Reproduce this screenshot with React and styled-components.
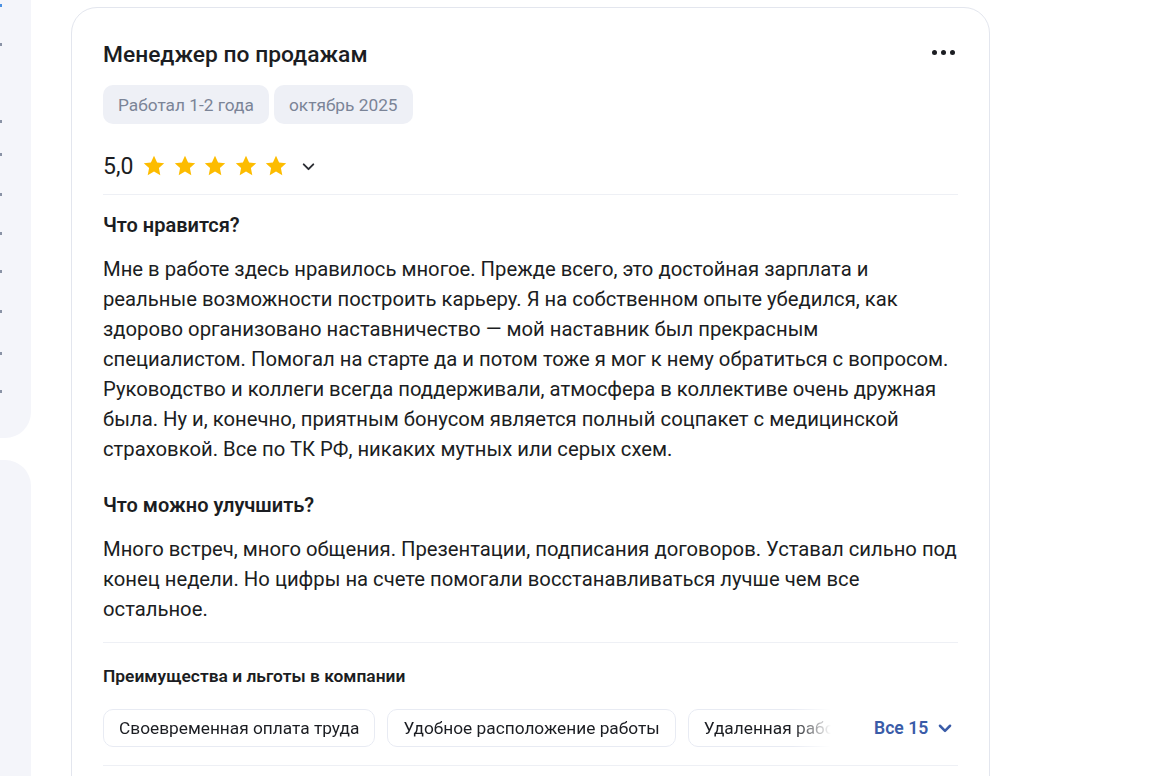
import React from 'react'
import styled, {createGlobalStyle} from 'styled-components'

const GlobalStyle = createGlobalStyle`
  html, body {
    margin: 0;
    padding: 0;
    background: #fff;
    font-family: Roboto, "Noto Sans", Arial, sans-serif;
    color: #1b1d22;
    overflow: hidden;
  }
  * {
    box-sizing: border-box;
  }
`

const liked_text = 'Мне в работе здесь нравилось многое. Прежде всего, это достойная зарплата и реальные возможности построить карьеру. Я на собственном опыте убедился, как здорово организовано наставничество — мой наставник был прекрасным специалистом. Помогал на старте да и потом тоже я мог к нему обратиться с вопросом. Руководство и коллеги всегда поддерживали, атмосфера в коллективе очень дружная была. Ну и, конечно, приятным бонусом является полный соцпакет с медицинской страховкой. Все по ТК РФ, никаких мутных или серых схем.'

const improve_text = 'Много встреч, много общения. Презентации, подписания договоров. Уставал сильно под конец недели. Но цифры на счете помогали восстанавливаться лучше чем все остальное.'

const benefits = [
  'Своевременная оплата труда',
  'Удобное расположение работы',
  'Удаленная работа',
]

const sidebar_marks = [4, 43, 120, 153, 193, 232, 270, 310, 352, 390]

const Star = () => (
  <svg width="24" height="24" viewBox="0 0 24 24">
    <path
      d="M12 1.8l3.1 6.6 7.1.8-5.3 4.9 1.4 7.1L12 17.6l-6.3 3.6 1.4-7.1L1.8 9.2l7.1-.8z"
      fill="#fdbc00"
    />
  </svg>
)

const Chevron = ({size = 16, color = '#2b2d33', stroke = 2}) => (
  <svg width={size} height={size} viewBox="0 0 16 16" fill="none">
    <path d="M3.5 6l4.5 4.5L12.5 6" stroke={color} strokeWidth={stroke} strokeLinecap="round" strokeLinejoin="round"/>
  </svg>
)

export default function App() {
  return (
    <Page>
      <GlobalStyle/>
      <Sidebar>
        <SidePanel>
          {sidebar_marks.map((top) => (
            <Mark key={top} style={{top}} first={top === 4}/>
          ))}
        </SidePanel>
        <SidePanel second/>
      </Sidebar>
      <Card>
        <Header>
          <Title>Менеджер по продажам</Title>
          <More>
            <Dot/><Dot/><Dot/>
          </More>
        </Header>
        <Tags>
          <Tag>Работал 1-2 года</Tag>
          <Tag>октябрь 2025</Tag>
        </Tags>
        <Rating>
          <Score>5,0</Score>
          <Stars>
            {[0, 1, 2, 3, 4].map((i) => <Star key={i}/>)}
          </Stars>
          <Expand>
            <Chevron size={17} stroke={1.8}/>
          </Expand>
        </Rating>
        <Divider/>
        <Section>
          <SectionTitle>Что нравится?</SectionTitle>
          <Text>{liked_text}</Text>
        </Section>
        <Section spaced>
          <SectionTitle>Что можно улучшить?</SectionTitle>
          <Text>{improve_text}</Text>
        </Section>
        <Divider top={18}/>
        <BenefitsTitle>Преимущества и льготы в компании</BenefitsTitle>
        <BenefitsRow>
          <Chips>
            {benefits.map((b) => <Chip key={b}>{b}</Chip>)}
          </Chips>
          <ShowAll>
            Все 15
            <Chevron size={18} color="#3a5ca8" stroke={2.2}/>
          </ShowAll>
        </BenefitsRow>
        <Divider top={18}/>
      </Card>
    </Page>
  )
}

const Page = styled.div`
  display: flex;
  align-items: flex-start;
  gap: 40px;
  width: 1154px;
  height: 776px;
  overflow: hidden;
`
const Sidebar = styled.div`
  width: 31px;
  flex: none;
  display: flex;
  flex-direction: column;
  gap: 22px;
`
const SidePanel = styled.div`
  position: relative;
  background: #f4f5fa;
  height: ${({second}) => second ? '400px' : '438px'};
  border-radius: ${({second}) => second ? '0 26px 0 0' : '0 0 26px 0'};
`
const Mark = styled.span`
  position: absolute;
  left: 0;
  width: 2px;
  height: 3px;
  background: ${({first}) => first ? '#4a90e2' : '#8a93a6'};
`
const Card = styled.div`
  flex: none;
  width: 919px;
  margin-top: 7px;
  min-height: 900px;
  border: 1px solid #e3e6ee;
  border-radius: 26px;
  padding: 33px 31px 0 31px;
  background: #fff;
`
const Header = styled.div`
  display: flex;
  align-items: center;
  justify-content: space-between;
  height: 28px;
`
const Title = styled.h2`
  margin: 0;
  font-size: 22.8px;
  font-weight: 500;
  line-height: 28px;
  color: #1b1d22;
`
const More = styled.div`
  display: flex;
  gap: 4px;
  margin-right: 3px;
  margin-top: -6px;
`
const Dot = styled.span`
  width: 5px;
  height: 5px;
  border-radius: 50%;
  background: #1b1d22;
`
const Tags = styled.div`
  display: flex;
  gap: 5px;
  margin-top: 16px;
`
const Tag = styled.div`
  height: 39px;
  display: flex;
  align-items: center;
  padding: 0 15px;
  background: #eef0f6;
  border-radius: 10px;
  font-size: 17.3px;
  color: #7b8497;
`
const Rating = styled.div`
  display: flex;
  align-items: center;
  height: 28px;
  margin-top: 28px;
`
const Score = styled.span`
  font-size: 23px;
  font-weight: 400;
  margin-right: 9px;
`
const Stars = styled.div`
  display: flex;
  gap: 6.5px;
  svg {
    display: block;
  }
`
const Expand = styled.span`
  display: flex;
  margin-left: 12px;
`
const Divider = styled.div`
  height: 1px;
  background: #eef0f5;
  margin-top: ${({top = 14}) => top}px;
`
const Section = styled.div`
  margin-top: ${({spaced}) => spaced ? '28px' : '17px'};
`
const SectionTitle = styled.h3`
  margin: 0;
  font-size: 20px;
  font-weight: 600;
  line-height: 26px;
`
const Text = styled.p`
  margin: 16px 0 0;
  font-size: 20.25px;
  line-height: 30px;
  color: #1b1d22;
  max-width: 858px;
`
const BenefitsTitle = styled.h4`
  margin: 22px 0 0;
  font-size: 17.4px;
  font-weight: 600;
  line-height: 22px;
`
const BenefitsRow = styled.div`
  display: flex;
  align-items: center;
  margin-top: 22px;
  height: 38px;
`
const Chips = styled.div`
  flex: none;
  width: 740px;
  display: flex;
  gap: 12px;
  overflow: hidden;
  -webkit-mask-image: linear-gradient(to right, #000 690px, transparent 728px);
  mask-image: linear-gradient(to right, #000 690px, transparent 728px);
`
const Chip = styled.div`
  flex: none;
  height: 38px;
  display: flex;
  align-items: center;
  padding: 0 15px;
  border: 1px solid #e8ebf3;
  border-radius: 10px;
  font-size: 17.3px;
  white-space: nowrap;
`
const ShowAll = styled.div`
  display: flex;
  align-items: center;
  gap: 8px;
  margin-left: 31px;
  font-size: 17.6px;
  font-weight: 600;
  color: #3a5ca8;
`
